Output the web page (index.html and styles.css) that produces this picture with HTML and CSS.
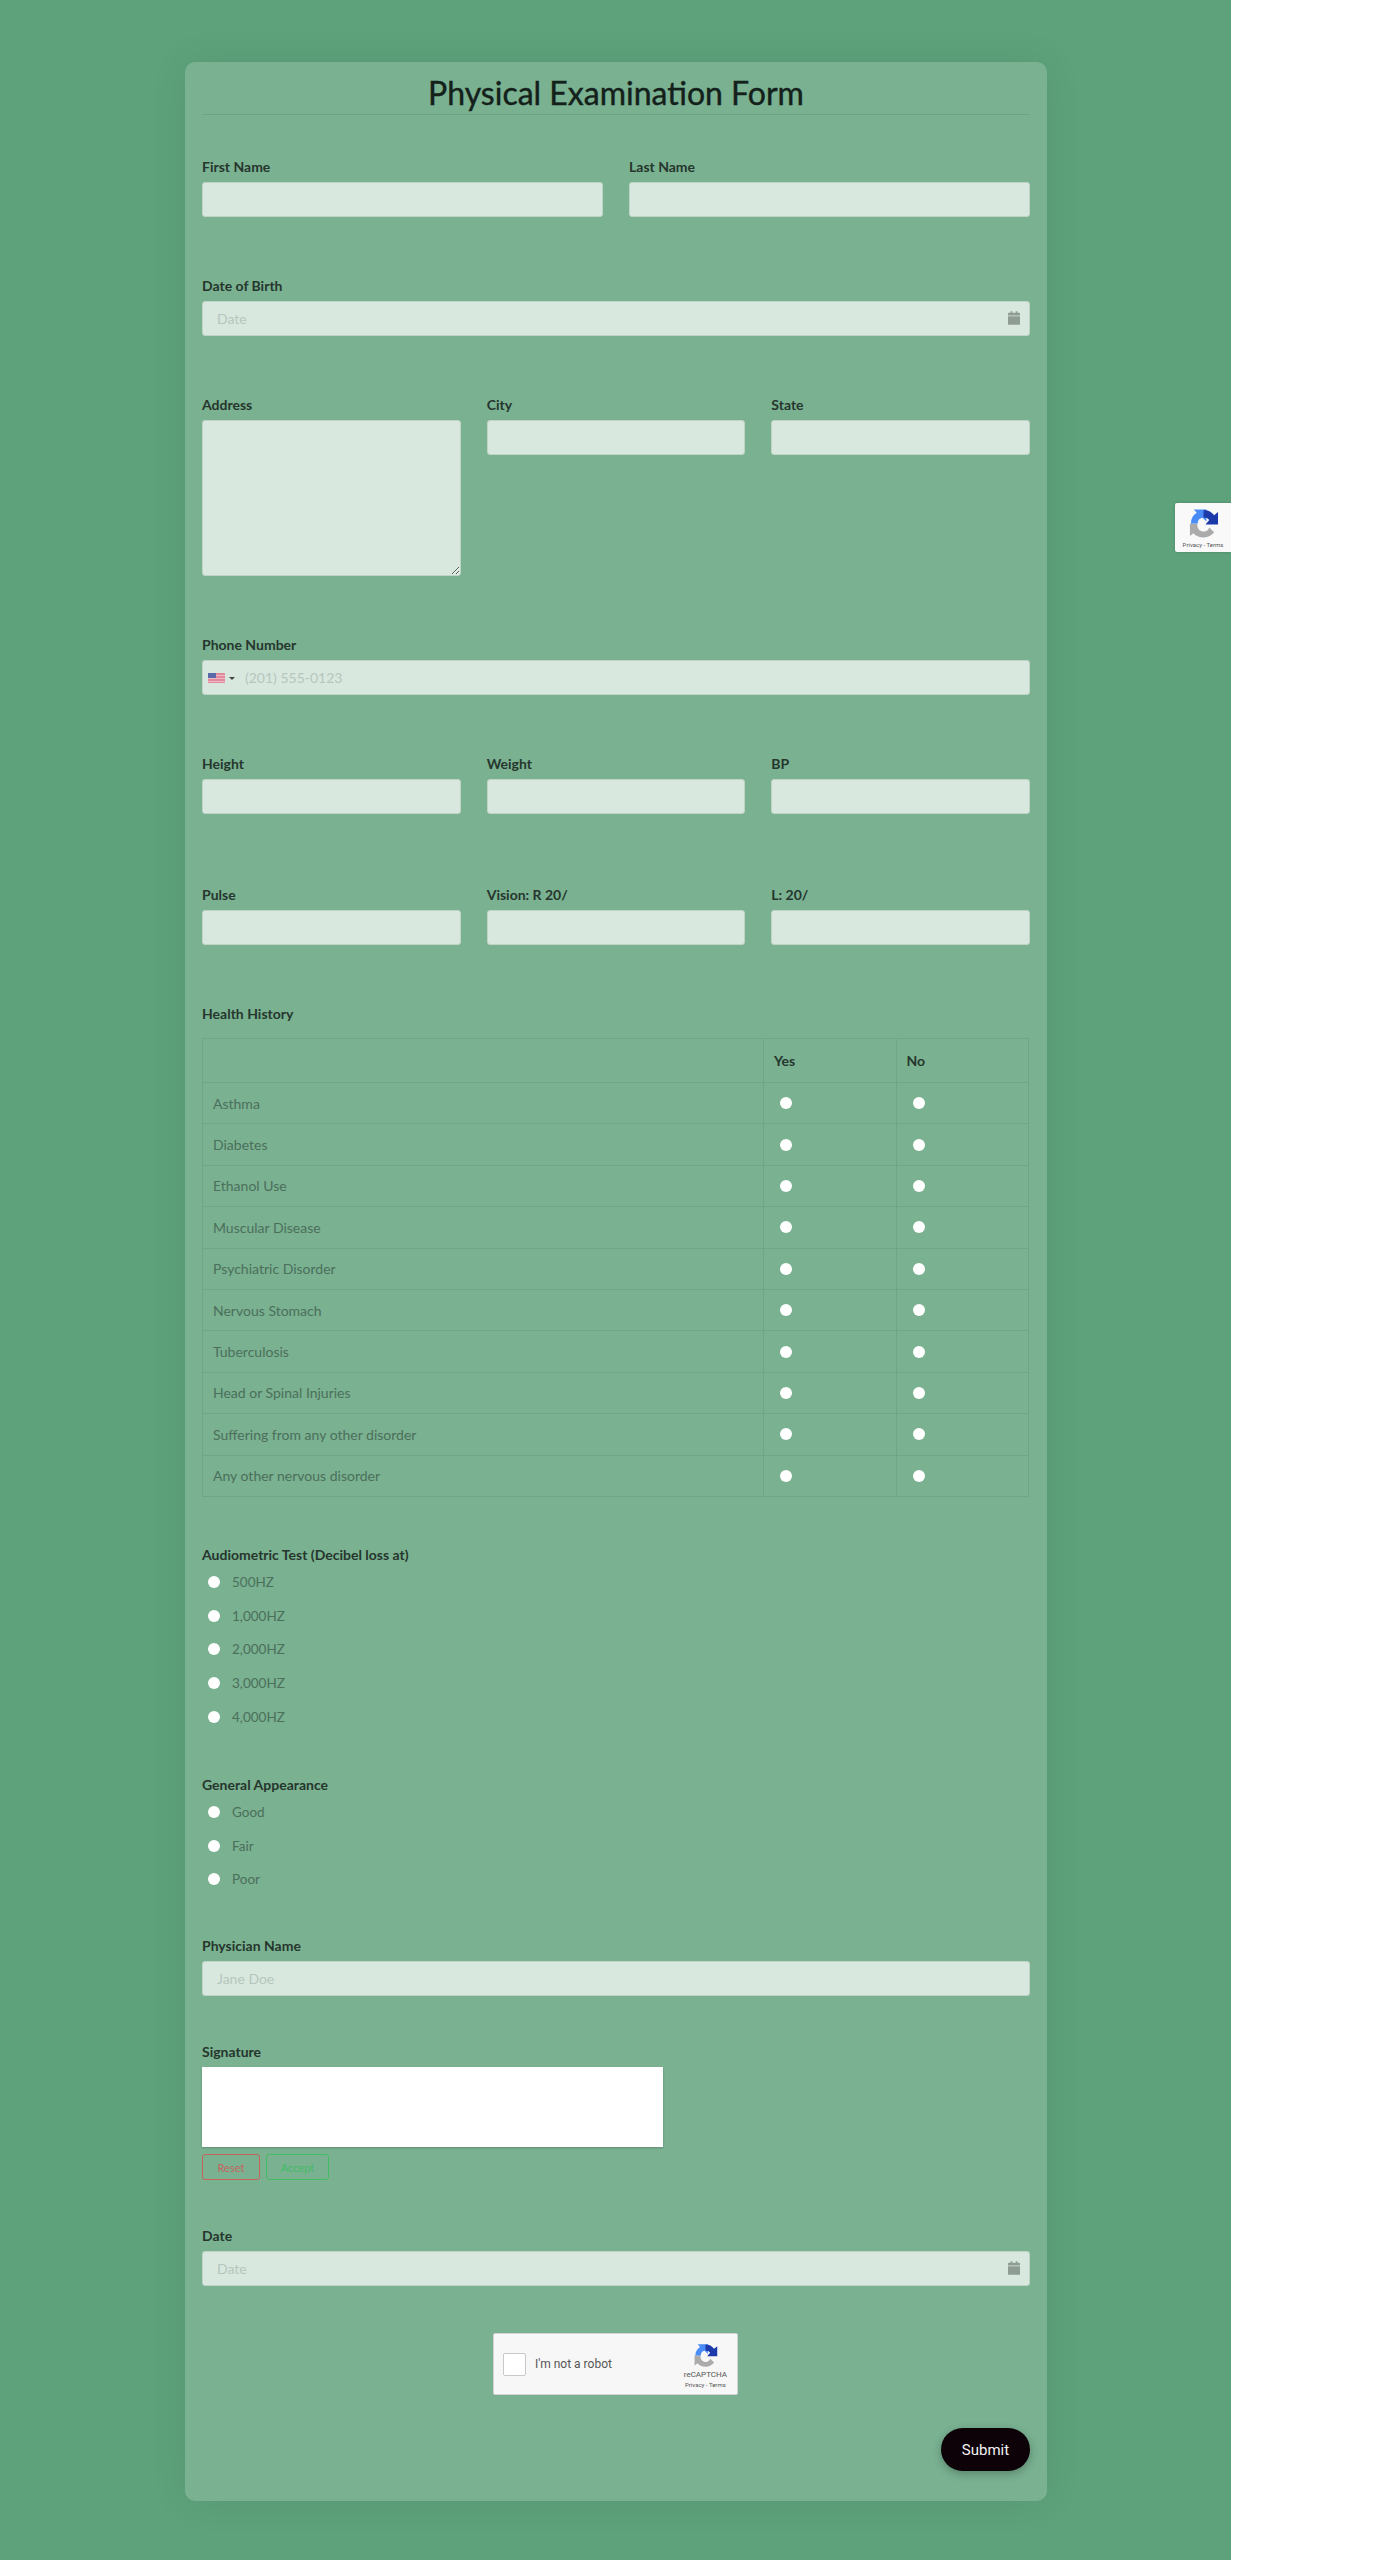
FILE: index.html
```html
<!DOCTYPE html>
<html lang="en">
<head>
    <meta charset="UTF-8">
    <meta name="viewport" content="width=device-width, initial-scale=1.0">
    <title>Physical Examination Form</title>
    <link rel="stylesheet" href="styles.css">
</head>
<body>
    <svg class="defs" width="0" height="0">
        <symbol id="rc-logo" viewBox="0 0 64 64">
            <path fill="#ababab" d="M6 32 H20 A12 12 0 0 0 44 40 L54 50 A28 28 0 0 1 11 52 L4 58 V32 Z"/>
            <path fill="#4a8cf7" d="M6 32 A26 26 0 0 1 18 10 L12 3 H38 V28 L30 20 A12 12 0 0 0 20 32 Z"/>
            <path fill="#1c3aa9" d="M32 4 A28 28 0 0 1 54 15 L62 8 V34 H36 L44 25 A12 12 0 0 0 32 20 Z"/>
        </symbol>
        <symbol id="calendar" viewBox="0 0 14 16">
            <path fill="#8f9c94" d="M3 0h2v2h4V0h2v2h2a1 1 0 0 1 1 1v2H0V3a1 1 0 0 1 1-1h2zM0 6h14v9a1 1 0 0 1-1 1H1a1 1 0 0 1-1-1z"/>
        </symbol>
    </svg>

    <form class="card">
        <h1 class="title">Physical Examination Form</h1>

        <div class="row cols2">
            <div class="field"><label>First Name</label><input type="text"></div>
            <div class="field"><label>Last Name</label><input type="text"></div>
        </div>

        <div class="row field date-field">
            <label>Date of Birth</label>
            <input type="text" placeholder="Date">
            <svg class="cal-icon"><use href="#calendar"/></svg>
        </div>

        <div class="row cols3">
            <div class="field"><label>Address</label><textarea></textarea></div>
            <div class="field"><label>City</label><input type="text"></div>
            <div class="field"><label>State</label><input type="text"></div>
        </div>

        <div class="row field phone-field">
            <label>Phone Number</label>
            <input type="text" placeholder="(201) 555-0123">
            <div class="flag">
                <svg width="17" height="10" viewBox="0 0 17 10">
                    <rect width="17" height="10" fill="#e2899c"/>
                    <rect y="2" width="17" height="1" fill="#edb9c4"/>
                    <rect y="5" width="17" height="1" fill="#edb9c4"/>
                    <rect y="8" width="17" height="1" fill="#edb9c4"/>
                    <rect width="8" height="5" fill="#5a69a8"/>
                </svg>
                <span class="caret"></span>
            </div>
        </div>

        <div class="row cols3 row-tall">
            <div class="field"><label>Height</label><input type="text"></div>
            <div class="field"><label>Weight</label><input type="text"></div>
            <div class="field"><label>BP</label><input type="text"></div>
        </div>

        <div class="row cols3">
            <div class="field"><label>Pulse</label><input type="text"></div>
            <div class="field"><label>Vision: R 20/</label><input type="text"></div>
            <div class="field"><label>L: 20/</label><input type="text"></div>
        </div>

        <div class="row history">
            <label>Health History</label>
            <table class="matrix">
                <tr class="head"><th></th><th>Yes</th><th>No</th></tr>
                <tr><td>Asthma</td><td><input type="radio" name="h1"></td><td><input type="radio" name="h1"></td></tr>
                <tr><td>Diabetes</td><td><input type="radio" name="h2"></td><td><input type="radio" name="h2"></td></tr>
                <tr><td>Ethanol Use</td><td><input type="radio" name="h3"></td><td><input type="radio" name="h3"></td></tr>
                <tr><td>Muscular Disease</td><td><input type="radio" name="h4"></td><td><input type="radio" name="h4"></td></tr>
                <tr><td>Psychiatric Disorder</td><td><input type="radio" name="h5"></td><td><input type="radio" name="h5"></td></tr>
                <tr><td>Nervous Stomach</td><td><input type="radio" name="h6"></td><td><input type="radio" name="h6"></td></tr>
                <tr><td>Tuberculosis</td><td><input type="radio" name="h7"></td><td><input type="radio" name="h7"></td></tr>
                <tr><td>Head or Spinal Injuries</td><td><input type="radio" name="h8"></td><td><input type="radio" name="h8"></td></tr>
                <tr><td>Suffering from any other disorder</td><td><input type="radio" name="h9"></td><td><input type="radio" name="h9"></td></tr>
                <tr><td>Any other nervous disorder</td><td><input type="radio" name="h10"></td><td><input type="radio" name="h10"></td></tr>
            </table>
        </div>

        <div class="group audio">
            <label>Audiometric Test (Decibel loss at)</label>
            <div class="option"><input type="radio" name="audio"><span>500HZ</span></div>
            <div class="option"><input type="radio" name="audio"><span>1,000HZ</span></div>
            <div class="option"><input type="radio" name="audio"><span>2,000HZ</span></div>
            <div class="option"><input type="radio" name="audio"><span>3,000HZ</span></div>
            <div class="option"><input type="radio" name="audio"><span>4,000HZ</span></div>
        </div>

        <div class="group appearance">
            <label>General Appearance</label>
            <div class="option"><input type="radio" name="look"><span>Good</span></div>
            <div class="option"><input type="radio" name="look"><span>Fair</span></div>
            <div class="option"><input type="radio" name="look"><span>Poor</span></div>
        </div>

        <div class="field physician">
            <label>Physician Name</label>
            <input type="text" placeholder="Jane Doe">
        </div>

        <div class="signature">
            <label>Signature</label>
            <div class="sign-pad"></div>
            <div class="sign-btns">
                <button type="button" class="btn-reset">Reset</button>
                <button type="button" class="btn-accept">Accept</button>
            </div>
        </div>

        <div class="field date-field last-date">
            <label>Date</label>
            <input type="text" placeholder="Date">
            <svg class="cal-icon"><use href="#calendar"/></svg>
        </div>

        <div class="captcha">
            <span class="check"></span>
            <span class="robot">I'm not a robot</span>
            <div class="captcha-brand">
                <svg class="captcha-logo"><use href="#rc-logo"/></svg>
                <span class="brand-name">reCAPTCHA</span>
                <span class="brand-links">Privacy - Terms</span>
            </div>
        </div>

        <div class="actions"><button type="submit" class="submit">Submit</button></div>
    </form>

    <!-- badge sits on top of the page, clipped at the edge -->
    <div class="badge">
        <svg class="badge-logo"><use href="#rc-logo"/></svg>
        <span class="brand-links">Privacy - Terms</span>
    </div>
</body>
</html>
```

FILE: styles.css
```css
*{padding:0; margin:0; box-sizing:border-box;}

html{background:#fff;}
body{
    position:relative;
    width:1231px;
    min-height:2560px;
    overflow:hidden;
    padding-top:62px;
    background:#5da27b;
    font-family:"Lato","Noto Sans",sans-serif;
    font-size:14px;
}
.defs{position:absolute;}

.card{
    width:862px;
    height:2439px;
    margin-left:185px;
    padding:14px 17px 30px 17px;
    background:#79b191;
    border-radius:10px;
    box-shadow:0 0 40px rgba(0,0,0,.07);
}
.title{
    height:39px;
    line-height:34px;
    margin-bottom:42px;
    border-bottom:1px solid #6ba484;
    text-align:center;
    font-size:32px;
    font-weight:400;
    -webkit-text-stroke:.4px #14201a;
    color:#14201a;
}

label{
    display:block;
    height:20px;
    line-height:20px;
    margin-bottom:5px;
    font-size:14px;
    font-weight:700;
    color:#26362d;
}
input[type=text], textarea{
    display:block;
    width:100%;
    height:35px;
    padding:0 14px;
    background:#d8e8df;
    border:1px solid #bfd3c7;
    border-radius:3px;
    font-family:inherit;
    font-size:14px;
}
textarea{height:156px; resize:both;}
input::placeholder{color:#b5c6bc; opacity:1;}

.row{margin-bottom:59px;}
.row-tall{margin-bottom:71px;}
.cols2{display:grid; grid-template-columns:1fr 1fr; column-gap:26px;}
.cols3{display:grid; grid-template-columns:1fr 1fr 1fr; column-gap:26px; align-items:start;}
.field{position:relative;}

.cal-icon{
    position:absolute;
    right:10px;
    bottom:11px;
    width:12px;
    height:14px;
}

.phone-field input{padding-left:42px;}
.flag{
    position:absolute;
    left:6px;
    bottom:12px;
    display:flex;
    align-items:center;
    gap:4px;
}
.flag svg{display:block;}
.caret{
    width:0;
    height:0;
    border:3px solid transparent;
    border-top-color:#444;
    border-bottom:0;
}

input[type=radio]{
    appearance:none;
    display:block;
    width:12px;
    height:12px;
    background:#fff;
    border-radius:50%;
}

.history{margin-bottom:48px;}
.history label{margin-bottom:14px;}
.matrix{
    width:827px;
    height:459px;
    table-layout:fixed;
    border-collapse:collapse;
    border:1px solid #6ea687;
    color:#4c6f5b;
}
.matrix td, .matrix th{
    width:132.5px;
    padding:0 10px;
    border-top:1px solid #6ea687;
    text-align:left;
    font-size:14px;
}
.matrix td+td, .matrix th+th{border-left:1px solid #6ea687;}
.matrix td:first-child, .matrix th:first-child{width:auto;}
.matrix th{color:#26362d; font-weight:700;}
.matrix tr.head{height:44px;}
.matrix input{margin-left:6px;}

.group{margin-bottom:41px;}
.group label{margin-bottom:0;}
.option{
    display:flex;
    align-items:center;
    height:33.8px;
    padding-left:6px;
    color:#4c6f5b;
    font-size:13.5px;
}
.option span{margin-left:12px;}
.appearance{margin-bottom:40px;}

.physician{margin-bottom:46px;}

.sign-pad{
    width:461px;
    height:80px;
    background:#fff;
    box-shadow:0 1px 2px rgba(0,0,0,.2);
}
.sign-btns{display:flex; gap:6px; margin-top:7px;}
.sign-btns button{
    height:26px;
    background:none;
    border-radius:3px;
    font-family:inherit;
    font-size:11px;
}
.btn-reset{width:58px; border:1px solid #c4655c; color:#c4655c;}
.btn-accept{width:63px; border:1px solid #43bd63; color:#43bd63;}
.signature{margin-bottom:46px;}

.last-date{margin-bottom:47px;}

.captcha{
    display:flex;
    align-items:center;
    width:245px;
    height:62px;
    margin-left:291px;
    padding:0 10px 0 9px;
    background:#f7f7f7;
    border:1px solid #d3d3d3;
    border-radius:2px;
    font-family:"Roboto",sans-serif;
}
.check{
    width:23px;
    height:23px;
    background:#fff;
    border:1px solid #c9c9c9;
    border-radius:2px;
}
.robot{margin-left:9px; font-size:12px; color:#555;}
.captcha-brand{
    display:flex;
    flex-direction:column;
    align-items:center;
    margin-left:auto;
    padding-top:3px;
    color:#555;
}
.captcha-logo{width:25px; height:25px;}
.brand-name{font-size:8px; line-height:10px; margin-top:2px;}
.brand-links{font-family:"Roboto",sans-serif; font-size:6px; line-height:9px; color:#555;}

.actions{display:flex; justify-content:flex-end; margin-top:33px;}
.submit{
    width:89px;
    height:43px;
    background:#0e0209;
    color:#f2f2f2;
    border:none;
    border-radius:22px;
    box-shadow:0 3px 8px rgba(0,0,0,.25);
    font-family:"Roboto",sans-serif;
    font-size:15px;
    font-weight:400;
}

.badge{
    position:absolute;
    left:1175px;
    top:503px;
    width:56px;
    height:49px;
    display:flex;
    flex-direction:column;
    align-items:center;
    padding-top:5px;
    background:#f9f9f9;
    border-radius:2px 0 0 2px;
    box-shadow:0 0 3px rgba(0,0,0,.2);
}
.badge-logo{width:31px; height:31px; margin-bottom:1px;}
```
